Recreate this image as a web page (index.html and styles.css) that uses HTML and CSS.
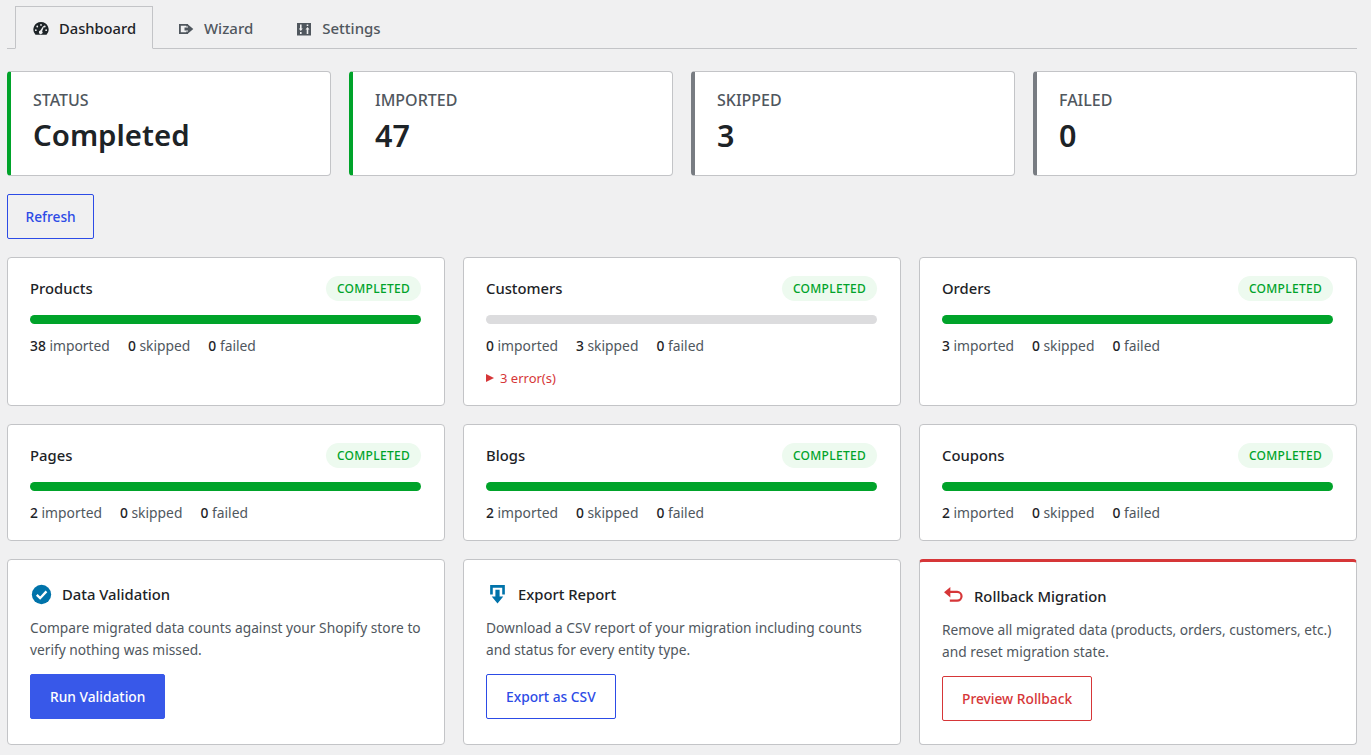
FILE: index.html
```html
<!DOCTYPE html>
<html lang="en">
<head>
  <meta charset="UTF-8" />
  <meta name="viewport" content="width=device-width, initial-scale=1.0" />
  <title>Migration Dashboard</title>
  <link rel="stylesheet" href="styles.css">
</head>
<body>

<div class="wrap">
  <nav class="tabs">
    <a class="tab active" href="#">
      <svg class="tab-icon" viewBox="1 1 18 18"><path d="M3.800 16.500A8.600 8.600 0 0 1 10 2a8.600 8.600 0 0 1 6.200 14.500zM10 4.400a1 1 0 1 0 0 2 1 1 0 0 0 0-2zM5.800 6.200a1 1 0 1 0 0 2 1 1 0 0 0 0-2zM14.200 6.200a1 1 0 1 0 0 2 1 1 0 0 0 0-2zM4.200 10.300a1 1 0 1 0 0 2 1 1 0 0 0 0-2zM15.800 10.300a1 1 0 1 0 0 2 1 1 0 0 0 0-2zM12.600 6.600l-3.400 5.200a2 2 0 1 0 2 .6l2.300-5.400z" fill-rule="evenodd"/></svg>
      Dashboard
    </a>
    <a class="tab" href="#">
      <svg class="tab-icon" viewBox="0 0 16 16"><path d="M0 3h9v2.400H7.200V4.800H1.800v6.400h5.400v-.6H9V13H0z"/><path d="M5.500 6.500H9V3.500L14.300 8 9 12.500v-3H5.500z"/></svg>
      Wizard
    </a>
    <a class="tab" href="#">
      <svg class="tab-icon" viewBox="0 0 16 16"><path d="M0 2h14v12.500H0zM3 3.500v4H1.800l2 2.500 2-2.500H4.600v-4zM3 11v2h1.600v-2zM9.700 13V8.500H8.500l2-2.500 2 2.500h-1.200V13zM9.700 3.500v1.500h1.600V3.500z" fill-rule="evenodd"/></svg>
      Settings
    </a>
  </nav>

  <section class="stats">
    <div class="stat stat-green">
      <div class="stat-label">STATUS</div>
      <div class="stat-value big">Completed</div>
    </div>
    <div class="stat stat-green">
      <div class="stat-label">IMPORTED</div>
      <div class="stat-value">47</div>
    </div>
    <div class="stat stat-gray">
      <div class="stat-label">SKIPPED</div>
      <div class="stat-value">3</div>
    </div>
    <div class="stat stat-gray">
      <div class="stat-label">FAILED</div>
      <div class="stat-value">0</div>
    </div>
  </section>

  <div class="toolbar">
    <button class="btn btn-outline btn-refresh">Refresh</button>
  </div>

  <section class="grid">
    <div class="card">
      <div class="entity-head"><h3>Products</h3><span class="badge">COMPLETED</span></div>
      <div class="bar"><div class="bar-fill"></div></div>
      <div class="counts"><span><b>38</b> imported</span><span><b>0</b> skipped</span><span><b>0</b> failed</span></div>
    </div>
    <div class="card">
      <div class="entity-head"><h3>Customers</h3><span class="badge">COMPLETED</span></div>
      <div class="bar"></div>
      <div class="counts"><span><b>0</b> imported</span><span><b>3</b> skipped</span><span><b>0</b> failed</span></div>
      <div class="errors"><i class="caret"></i>3 error(s)</div>
    </div>
    <div class="card">
      <div class="entity-head"><h3>Orders</h3><span class="badge">COMPLETED</span></div>
      <div class="bar"><div class="bar-fill"></div></div>
      <div class="counts"><span><b>3</b> imported</span><span><b>0</b> skipped</span><span><b>0</b> failed</span></div>
    </div>
    <div class="card">
      <div class="entity-head"><h3>Pages</h3><span class="badge">COMPLETED</span></div>
      <div class="bar"><div class="bar-fill"></div></div>
      <div class="counts"><span><b>2</b> imported</span><span><b>0</b> skipped</span><span><b>0</b> failed</span></div>
    </div>
    <div class="card">
      <div class="entity-head"><h3>Blogs</h3><span class="badge">COMPLETED</span></div>
      <div class="bar"><div class="bar-fill"></div></div>
      <div class="counts"><span><b>2</b> imported</span><span><b>0</b> skipped</span><span><b>0</b> failed</span></div>
    </div>
    <div class="card">
      <div class="entity-head"><h3>Coupons</h3><span class="badge">COMPLETED</span></div>
      <div class="bar"><div class="bar-fill"></div></div>
      <div class="counts"><span><b>2</b> imported</span><span><b>0</b> skipped</span><span><b>0</b> failed</span></div>
    </div>

    <div class="card action">
      <h3 class="action-title">
        <svg class="action-icon" viewBox="0 0 20 20"><circle cx="10" cy="10" r="9.200" fill="#0073aa"/><path d="M5.500 10.300l3.200 3.200 6-6.500" fill="none" stroke="#fff" stroke-width="2.200"/></svg>
        Data Validation
      </h3>
      <p>Compare migrated data counts against your Shopify store to verify nothing was missed.</p>
      <button class="btn btn-primary">Run Validation</button>
    </div>
    <div class="card action">
      <h3 class="action-title">
        <svg class="action-icon" viewBox="0 0 20 20"><path d="M3 1h14v9h-2.500V3.500h-9V10H3z" fill="#0073aa"/><path d="M8 5.500h4V12h3.500L10 18.500 4.500 12H8z" fill="#0073aa"/></svg>
        Export Report
      </h3>
      <p>Download a CSV report of your migration including counts and status for every entity type.</p>
      <button class="btn btn-outline">Export as CSV</button>
    </div>
    <div class="card action danger">
      <h3 class="action-title">
        <svg class="action-icon" viewBox="0 0 20 20"><path d="M1 6l6-5v3.600h6.500a5.200 5.200 0 0 1 0 10.400H6.500v-2.100h7a3.100 3.100 0 0 0 0-6.200H7V11z" fill="#d63638"/></svg>
        Rollback Migration
      </h3>
      <p>Remove all migrated data (products, orders, customers, etc.) and reset migration state.</p>
      <button class="btn btn-danger">Preview Rollback</button>
    </div>
  </section>
</div>

</body>
</html>
```

FILE: styles.css
```css
* {
  box-sizing: border-box;
}

body {
  margin: 0;
  padding: 6px 14px 0 7px;
  background: #f0f0f1;
  color: #1d2327;
  font-family: 'Noto Sans', sans-serif;
  font-size: 13.75px;
  line-height: 1.5;
  height: 755px;
  overflow: hidden;
}

/* tabs */
.tabs {
  display: flex;
  height: 43px;
  padding-left: 8px;
  gap: 8px;
  border-bottom: 1px solid #c3c4c7;
}

.tab {
  display: flex;
  align-items: center;
  gap: 9px;
  height: 43px;
  padding: 2px 17px 0;
  color: #50575e;
  font-size: 15px;
  font-weight: 500;
  text-decoration: none;
  border: 1px solid transparent;
}

.tab.active {
  gap: 10px;
  padding-right: 16px;
  color: #1d2327;
  font-size: 14.7px;
  background: #f0f0f1;
  border-color: #c3c4c7;
  border-bottom-color: #f0f0f1;
}

.tab-icon {
  width: 16px;
  height: 16px;
  fill: currentColor;
}

/* stat cards */
.stats {
  display: grid;
  grid-template-columns: repeat(4, 1fr);
  gap: 18px;
  margin-top: 22px;
}

.stat {
  height: 105px;
  padding: 18px 22px;
  background: #fff;
  border: 1px solid #c3c4c7;
  border-left-width: 4px;
  border-radius: 4px;
}

.stat-green {
  border-left-color: #00a32a;
}

.stat-gray {
  border-left-color: #787c82;
}

.stat-label {
  color: #50575e;
  font-size: 16px;
  font-weight: 500;
  line-height: 20px;
}

.stat-value {
  margin-top: 5px;
  font-size: 30.5px;
  font-weight: 600;
  line-height: 40px;
}

.big {
  font-size: 29.4px;
}

/* buttons */
.btn {
  height: 45px;
  padding: 0 19px;
  font-family: inherit;
  font-size: 13.75px;
  font-weight: 500;
  border-radius: 2px;
  cursor: pointer;
}

.btn-outline {
  color: #2c4be6;
  background: #fff;
  border: 1px solid #2c4be6;
}

.toolbar {
  margin: 18px 0;
}

.toolbar .btn-refresh {
  padding: 0 17.5px;
  background: transparent;
}

.btn-primary {
  color: #fff;
  background: #3858e9;
  border: 1px solid #3858e9;
}

.btn-danger {
  color: #d63638;
  background: #fff;
  border: 1px solid #d63638;
}

/* entity cards */
.grid {
  display: grid;
  grid-template-columns: repeat(3, 1fr);
  grid-template-rows: 149px 117px 186px;
  gap: 18px;
}

.card {
  padding: 18px 23px 18px 22px;
  background: #fff;
  border: 1px solid #c3c4c7;
  border-radius: 4px;
}

.entity-head {
  display: flex;
  justify-content: space-between;
  align-items: center;
}

h3 {
  margin: 0;
  font-size: 14.8px;
  font-weight: 500;
}

.badge {
  height: 25px;
  padding: 0 11px;
  color: #00a32a;
  background: #edfaef;
  font-size: 12px;
  font-weight: 500;
  line-height: 25px;
  letter-spacing: 0.3px;
  border-radius: 13px;
}

.bar {
  height: 9px;
  margin-top: 14px;
  background: #dcdcde;
  border-radius: 5px;
  overflow: hidden;
}

.bar-fill {
  width: 100%;
  height: 100%;
  background: #00a32a;
}

.counts {
  display: flex;
  gap: 18px;
  margin-top: 12px;
  color: #50575e;
  font-size: 13.85px;
  line-height: 20px;
}

.counts b {
  color: #1d2327;
  font-weight: 500;
}

.errors {
  display: flex;
  align-items: center;
  margin-top: 12px;
  color: #d63638;
  font-size: 13px;
  line-height: 20px;
}

.caret {
  width: 0;
  height: 0;
  margin-right: 6px;
  border-left: 8px solid #d63638;
  border-top: 4px solid transparent;
  border-bottom: 4px solid transparent;
}

/* action cards */
.action {
  padding-top: 23px;
}

.danger {
  border-top: 3px solid #d63638;
}

.action-title {
  display: flex;
  align-items: center;
  gap: 10px;
  line-height: 22px;
}

.action-icon {
  width: 21px;
  height: 21px;
  margin-left: 1px;
}

.action p {
  margin: 12px 0 13px;
  color: #50575e;
  line-height: 22px;
}
```
